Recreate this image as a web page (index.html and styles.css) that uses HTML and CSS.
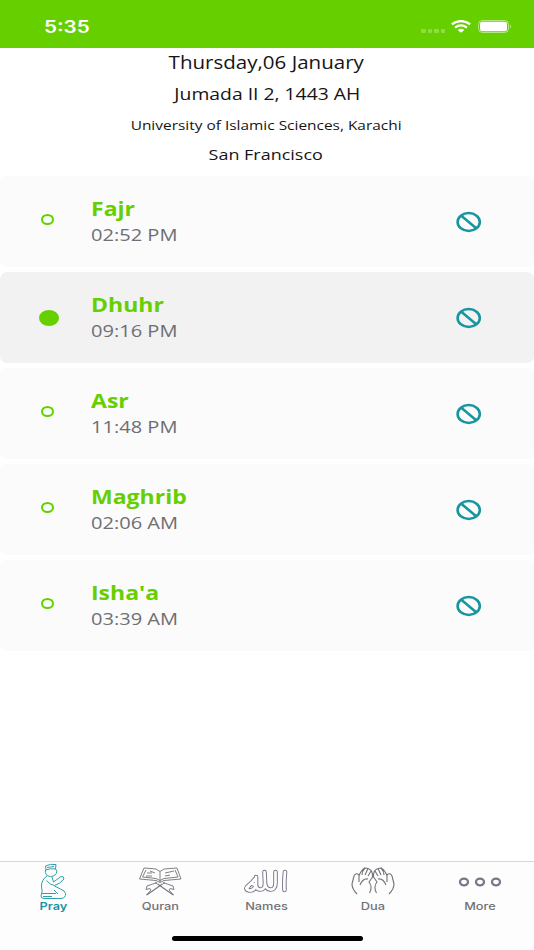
FILE: index.html
```html
<!DOCTYPE html>
<html lang="en">
<head>
<meta charset="utf-8">
<title>Prayer times</title>
<link rel="stylesheet" href="styles.css">
</head>
<body>
<svg width="0" height="0" class="defs" aria-hidden="true">
  <symbol id="mute" viewBox="0 0 26 22"><g fill="none" stroke="#1895a0" stroke-width="2.6"><ellipse cx="12.7" cy="11" rx="11.1" ry="9"/><path d="M5 4.6 20.500 17.4"/></g></symbol>
</svg>
<header class="status">
  <span class="clock wide">5:35</span>
  <div class="signals">
    <span class="dots"><i></i><i></i><i></i><i></i></span>
    <svg class="wifi" width="20" height="13" viewBox="0 0 20 13" fill="none" stroke="#fff"><path stroke-width="2.3" d="M.8 4.3Q10-2.1 19.2 4.3"/><path stroke-width="2.3" d="M4 7.6Q10 3.2 16 7.6"/><path fill="#fff" stroke="none" d="M6.700 9.9Q10 7.6 13.3 9.9L10 12.8Z"/></svg>
    <svg width="35" height="13" viewBox="0 0 35 13"><rect x=".5" y=".5" width="30" height="12" rx="4" fill="none" stroke="#fff" stroke-opacity=".5"/><rect x="2" y="1.8" width="27" height="9.4" rx="2.3" fill="#fff"/><path d="M32 4.5Q34.4 6.5 32 8.5Z" fill="#fff" fill-opacity=".5"/></svg>
  </div>
</header>
<section class="info">
  <p class="date"><span class="wide">Thursday,06 January</span></p>
  <p class="hijri"><span class="wide">Jumada II 2, 1443 AH</span></p>
  <p class="method"><span class="wide">University of Islamic Sciences, Karachi</span></p>
  <p class="city"><span class="wide">San Francisco</span></p>
</section>
<main class="prayers">
  <article class="card"><span class="mark"></span><div class="label"><h2>Fajr</h2><time>02:52 PM</time></div><svg class="mute"><use href="#mute"/></svg></article>
  <article class="card current"><span class="mark"></span><div class="label"><h2>Dhuhr</h2><time>09:16 PM</time></div><svg class="mute"><use href="#mute"/></svg></article>
  <article class="card"><span class="mark"></span><div class="label"><h2>Asr</h2><time>11:48 PM</time></div><svg class="mute"><use href="#mute"/></svg></article>
  <article class="card"><span class="mark"></span><div class="label"><h2>Maghrib</h2><time>02:06 AM</time></div><svg class="mute"><use href="#mute"/></svg></article>
  <article class="card"><span class="mark"></span><div class="label"><h2>Isha'a</h2><time>03:39 AM</time></div><svg class="mute"><use href="#mute"/></svg></article>
</main>
<footer class="bottom">
  <nav class="tabs">
    <a class="tab active"><svg width="28" height="38" viewBox="0 0 28 38"><path d="M6.500 4Q11 1.500 17 2.500L16.500 7Q11 6 7 8ZM6.500 8Q5.500 14 11.500 14.500 17 14.500 18 9L16.500 7M8 14Q2 18 2.500 25 4 29 2 34 2 36.500 5 36.500H22Q27 36 26.500 31.500 26 28.500 21.500 27L15.500 24M13 15 14.500 20 22 14.500Q25 14 25 17 21 22 15.500 23.500 11 23 7.500 18.500M3 31.500H17M15 28 19 32M4 34.500H13M8 5.500 15 4.500"/></svg><span class="wide">Pray</span></a>
    <a class="tab"><svg width="44" height="38" viewBox="0 0 44 38"><path d="M6 6 1.500 17 18 18.500 22 20.500 26 18.500 43 17 39 6 26 7 22 9.500 18 7ZM8 8 4.500 15 18 16.500 22 18.500 26 16.500 40 15 37 8M22 9.500V20M19 20.500 9 24 8 27.500 12 26.500 13 28 8.500 33 24 22M25 20.500 35 24 36 27.500 32 26.500 31 28 35.500 33 20 22M9 33 27 20.500M35 33 17 20.500M9 11H14M12 9 17 11M27 11 36 9M27 14 32 13M8 14H14"/></svg><span class="wide">Quran</span></a>
    <a class="tab names"><svg width="44" height="38" viewBox="0 0 44 38"><g id="script" class="outer"><path id="strokes" d="M41 10Q40 20 40.500 28M31.500 10V21Q31.500 28 26 27.500 21.500 27 21 21L20.500 10M21 21Q21 28 15.500 27.500 12 27 12 22V15M12 22Q11 29 5 28.500 0 27 4.500 23.500 9 20 10.500 17.500M3.500 26Q6 20 10 22.500"/></g><use href="#strokes" class="inner"/></svg><span class="wide">Names</span></a>
    <a class="tab dua"><svg width="44" height="38" viewBox="0 0 44 38"><g id="hand"><path d="M6 32Q1 27 1 22L3 14Q5 10 8 13V20M8 14Q10 8 14 6L17 6.500Q22 8 21.500 15L18 20Q22 25 18.500 31M14 6Q11 9 11 13M17 6.500 14 13M20 9 17 14M17 17Q12 16 9 23"/></g><use href="#hand" transform="translate(44 0) scale(-1 1)"/></svg><span class="wide">Dua</span></a>
    <a class="tab more"><svg width="44" height="38" viewBox="0 0 44 38"><ellipse cx="6" cy="20" rx="4" ry="3.3"/><ellipse cx="22" cy="20" rx="4" ry="3.3"/><ellipse cx="38" cy="20" rx="4" ry="3.3"/></svg><span class="wide">More</span></a>
  </nav>
  <div class="home"></div>
</footer>
</body>
</html>
```

FILE: styles.css
```css
* { box-sizing: border-box; }
body { margin: 0; width: 534px; height: 950px; display: flex; flex-direction: column; background: #fff; font-family: "Open Sans", "Noto Sans", sans-serif; overflow: hidden; }
p, h2 { margin: 0; }
.defs { position: absolute; }
.wide { display: inline-block; transform: scaleX(1.217); }
.status { height: 48px; flex: none; background: #66cf00; color: #fff; display: flex; justify-content: space-between; padding: 14px 22px 0 44px; }
.clock { font: 600 17px/26px Inter, sans-serif; transform-origin: left; }
.signals { display: flex; padding-top: 6px; }
.dots { display: flex; gap: 2px; padding: 9px 6px 0 1px; }
.dots i { width: 4.5px; height: 4px; border-radius: 1px; background: #fff; opacity: .28; }
.wifi { margin-right: 7px; }
.signals { margin-right: -1px; }
.info { height: 128px; flex: none; text-align: center; color: #151515; }
.info p { white-space: nowrap; }
.date { font-size: 17.5px; line-height: 29px; }
.date .wide { transform: translateX(-1px) scaleX(1.173); }
.hijri { font-size: 16.5px; line-height: 33px; }
.hijri .wide { transform: scaleX(1.172); }
.method { font-size: 13px; line-height: 31px; }
.method .wide { transform: translateX(-1px) scaleX(1.187); }
.city { font-size: 15px; line-height: 26px; }
.city .wide { transform: translateX(-1px) scaleX(1.197); }
.prayers { display: flex; flex-direction: column; gap: 5px; }
.card { height: 91px; border-radius: 7px; background: #fbfbfb; display: flex; align-items: center; padding: 0 52px 0 41px; }
.current { background: #f2f2f2; }
.mark { width: 13px; height: 11px; border: 2px solid #66cf00; border-radius: 50%; margin: 0 36.5px 4px 0; }
.current .mark { width: 20px; height: 16px; background: #66cf00; margin: 0 31.5px 0 -2px; }
.label { flex: 1; transform: scaleX(1.18); transform-origin: left; }
.label h2 { font-size: 19.5px; line-height: 27px; font-weight: 700; color: #66cf00; }
.label time { display: block; font-size: 17px; line-height: 26px; color: #6e6e73; }
.mute { width: 26px; height: 22px; }
.bottom { margin-top: auto; height: 89px; border-top: 1px solid #d4d7d8; background: #fdfdfd; }
.tabs { display: grid; grid-template-columns: repeat(5, 106.6px); }
.tab { display: flex; flex-direction: column; align-items: center; color: #727277; font: 500 10.5px/13px Inter, sans-serif; }
.tab svg { fill: none; stroke: currentColor; stroke-width: .9; stroke-linejoin: round; }
.tab.active { color: #1895a0; font-weight: 600; }
.names svg { stroke-linecap: round; }
.outer { stroke: #77778a; stroke-width: 4.6; }
.inner { stroke: #fdfdfd; stroke-width: 2.7; }
.outer path { stroke-width: inherit; }
.inner { stroke-width: 2.7; }
.dua svg { stroke-width: 1.1; }
.more svg { stroke: #77778a; stroke-width: 2.3; }
.home { width: 191px; height: 5px; border-radius: 3px; background: #000; margin: 23px auto 0; }
```
